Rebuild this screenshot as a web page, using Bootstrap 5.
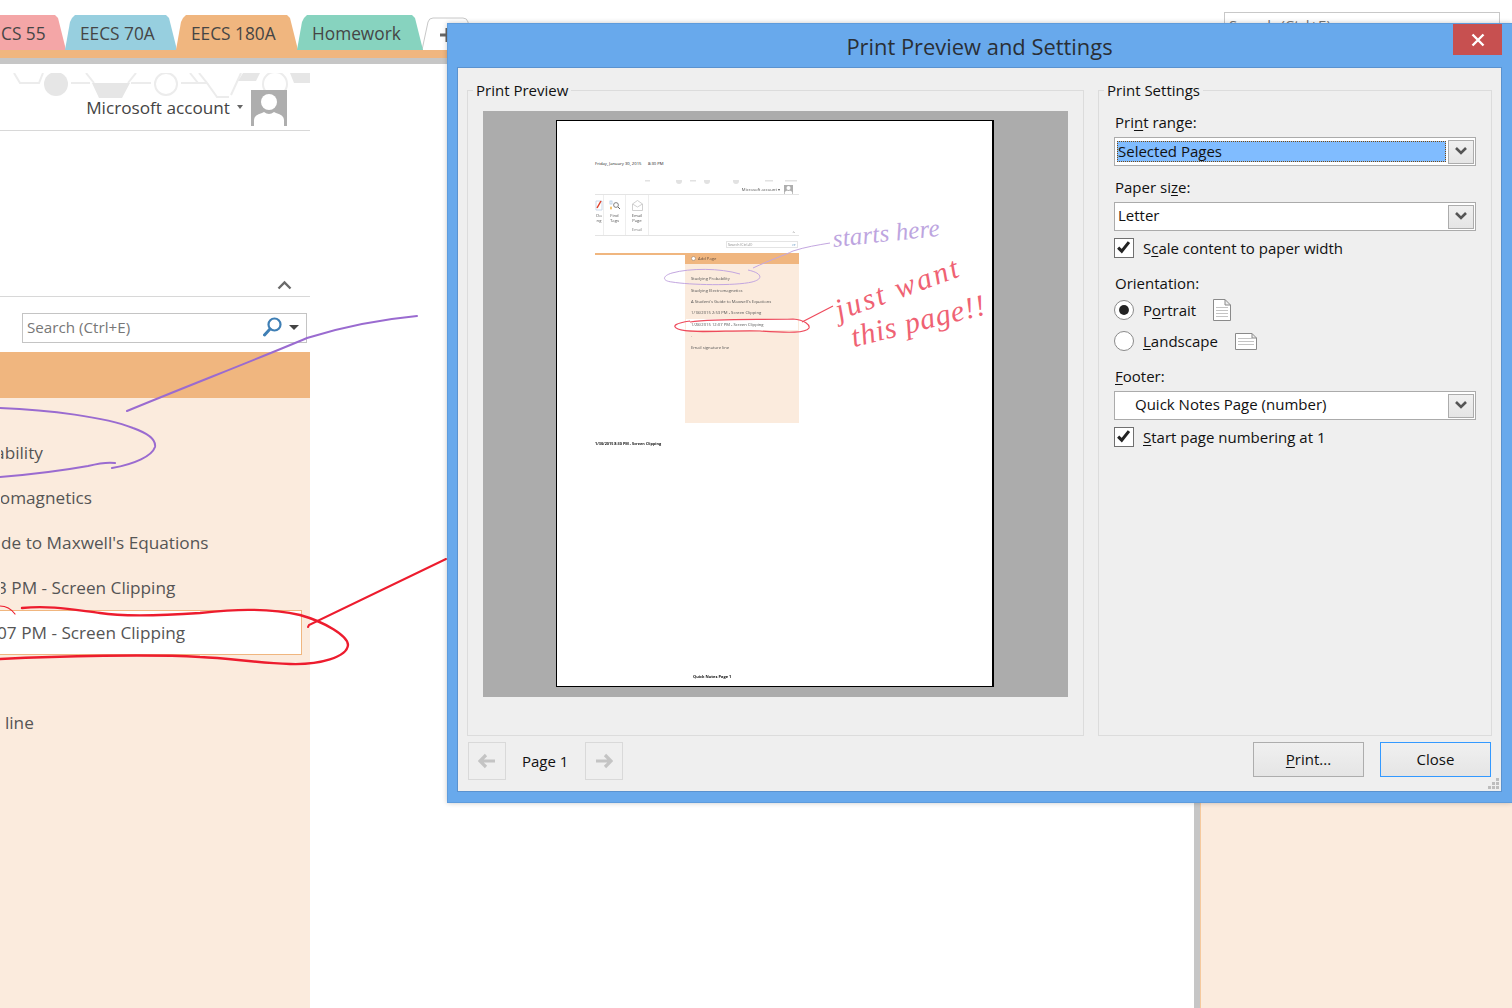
<!DOCTYPE html>
<html lang="en">
<head>
<meta charset="UTF-8">
<title>Print Preview and Settings</title>
<link rel="stylesheet" href="https://cdn.jsdelivr.net/npm/bootstrap@5.3.0/dist/css/bootstrap.min.css">
<style>
    html, body { margin: 0; height: 1008px; overflow: hidden; background: #fff; }
    body, .btn, legend { font-family: "Open Sans", "Noto Sans", sans-serif; }
    .desk { position: relative; width: 1512px; height: 1008px; overflow: hidden; display: flex; flex-direction: column; }

    /* notebook behind the dialog */
    .tab-row { height: 50px; flex: none; display: flex; align-items: flex-end; overflow: hidden; }
    .nb-tab {
        height: 35px; flex: none; display: flex; align-items: center; padding: 3px 0 0 15px;
        font-size: 17.3px; color: #454545; margin-right: -1px;
        clip-path: polygon(0 100%, 5px 7px, 7px 3px, 10px 0, calc(100% - 11px) 0, calc(100% - 8px) 3px, calc(100% - 7px) 7px, 100% 100%);
    }
    .tab-pink { background: #f4a6a7; width: 66px; padding-left: 0; text-indent: 1px; clip-path: polygon(0 0, calc(100% - 11px) 0, calc(100% - 8px) 3px, calc(100% - 7px) 7px, 100% 100%, 0 100%); }
    .tab-blue { background: #97cfdf; width: 112px; }
    .tab-orange { background: #f0b67f; width: 122px; }
    .tab-green { background: #87d3bf; width: 126px; }
    .tab-search {
        width: 276px; height: 24px; border: 1px solid #c8c8c8; align-self: flex-start; margin: 12px 12px 0 auto;
        font-size: 15px; color: #777; padding: 1px 4px; flex: none;
    }
    .section-bar { height: 8px; background: #f0b67f; flex: none; }
    .gray-bar { height: 6px; background: #c6c6c6; flex: none; }
    .nb-body { flex: 1; display: flex; min-height: 0; }
    .left-col { width: 310px; flex: none; overflow: hidden; display: flex; flex-direction: column; padding-top: 9px; }
    .deco { display: block; margin-bottom: -8px; flex: none; }
    .account-row { height: 36px; display: flex; justify-content: flex-end; align-items: center; padding-right: 23px; flex: none; font-size: 17.2px; color: #444; position: relative; }
    .account-caret { border-left: 3.5px solid transparent; border-right: 3.5px solid transparent; border-top: 4px solid #666; margin: 0 8px 3px 7px; }
    .ribbon-area { height: 167px; flex: none; margin-top: 4px; border-top: 1px solid #d8d8d8; border-bottom: 1px solid #d8d8d8; display: flex; justify-content: flex-end; align-items: flex-end; padding: 0 18px 6px 0; }
    .search-row { height: 55px; flex: none; padding: 16px 3px 0 22px; }
    .nb-search { height: 30px; border: 1px solid #c4c4c4; display: flex; align-items: center; padding: 0 7px 2px 4px; font-size: 15.2px; color: #777; }
    .search-caret { border-left: 5px solid transparent; border-right: 5px solid transparent; border-top: 5px solid #444; margin-left: 7px; }
    .pages-head { height: 46px; background: #f0b67f; flex: none; }
    .pages-list { flex: 1; background: #fbebdd; padding-top: 32px; white-space: nowrap; }
    .page-row { height: 45px; display: flex; align-items: center; font-size: 17.2px; color: #555; width: 302px; border: 1px solid transparent; overflow: hidden; }
    .page-row span { flex: none; margin-left: var(--cut); }
    .page-row.on { background: #fff; border-color: #f0b67f; border-left: 0; }
    .splitter { margin-left: 884px; width: 6px; background: #c6c6c6; flex: none; }
    .right-peach { flex: 1; background: #fbebdd; border-left: 1px solid #f5c99d; }
    .ink-back { position: absolute; left: 0; top: 0; pointer-events: none; }

    /* dialog */
    .dlg { position: absolute; left: 447px; top: 23px; width: 1065px; height: 780px; background: #68a9ec; box-shadow: 0 0 5px rgba(0,0,0,.22); display: flex; flex-direction: column; border: 1px solid #5e9cdd; border-right: 0; }
    .dlg-title { height: 43px; flex: none; display: flex; align-items: center; justify-content: center; font-size: 21.9px; color: #2a2f36; padding-top: 4px; padding-right: 1px; }
    .dlg-close { position: absolute; right: 10px; top: 0; width: 49px; height: 31px; background: #c75050; display: flex; align-items: center; justify-content: center; }
    .dlg-main { margin: 0 10px 10px 9px; flex: 1; background: #efefef; border: 1px solid #5a92cf; display: flex; flex-direction: column; position: relative; min-height: 0; }
    .dlg-cols { display: flex; gap: 14px; padding: 12px 9px 0 9px; height: 668px; flex: none; }
    .grp { margin: 0; border: 1px solid #dcdcdc; padding: 0; min-width: 0; height: 656px; }
    .grp legend { float: none; width: auto; font-size: 15px; line-height: 20px; margin: 0 0 0 5px; padding: 0 3px; color: #111; }
    .grp-preview { width: 617px; flex: none; }
    .grp-settings { width: 394px; flex: none; padding: 0 15px 0 15px; color: #111; font-size: 15px; }
    .preview-gray { margin: 11px 15px 0 15px; height: 586px; background: #acacac; padding: 9px 0 0 73px; }
    .prev-page { position: relative; width: 438px; height: 567px; background: #fff; border: 1px solid #000; border-right-width: 2px; overflow: hidden; padding: 0 0 0 38px; display: flex; flex-direction: column; color: #333; }
    .ink-front { position: absolute; left: -1px; top: -1px; width: 438px; height: 567px; }
    .hand { position: absolute; font-family: "Liberation Serif", serif; font-style: italic; white-space: nowrap; line-height: 1; transform-origin: 0 100%; }
    .hand-purple { color: #bda5e0; font-size: 25px; letter-spacing: .2px; left: 277px; top: 105px; transform: rotate(-6deg); }
    .hand-red { color: #ef6273; font-size: 30px; }
    .hand-a { left: 284px; top: 174px; transform: rotate(-20deg); letter-spacing: 2.5px; }
    .hand-b { left: 298px; top: 201px; transform: rotate(-14deg); letter-spacing: .8px; }

    .mini-date { font-size: 4.2px; line-height: 5px; margin-top: 40px; height: 5px; color: #222; white-space: pre; flex: none; }
    .mini-app { width: 204px; height: 243px; margin-top: 14px; display: flex; flex-direction: column; flex: none; font-size: 4.2px; line-height: 5px; color: #555; filter: blur(.2px); }
    .mini-deco { height: 5px; display: block; margin-bottom: -1px; flex: none; }
    .mini-account { height: 11px; flex: none; display: flex; align-items: center; justify-content: flex-end; padding-right: 6px; gap: 4px; border-bottom: 1px solid #e4e4e4; }
    .mini-ribbon { height: 41px; flex: none; display: flex; border-bottom: 1px solid #e4e4e4; text-align: center; }
    .mini-group { display: flex; flex-direction: column; align-items: center; border-right: 1px solid #eee; padding-top: 5px; }
    .mini-group svg { display: block; margin-bottom: 2px; }
    .mini-search-row { height: 17px; flex: none; padding: 5px 1px 0 131px; }
    .mini-search { height: 7px; border: 1px solid #e4e4e4; display: flex; justify-content: space-between; align-items: center; line-height: 4px; font-size: 3.6px; color: #888; padding: 0 1px; }
    .mini-split { flex: 1; display: flex; min-height: 0; }
    .mini-left { width: 90px; flex: none; border-top: 2px solid #f0b67f; }
    .mini-pages { flex: 1; background: #fbebdd; }
    .mini-head { height: 11px; background: #f0b67f; padding-left: 6px; display: flex; align-items: center; gap: 2px; color: #6b5240; }
    .mini-list { padding: 9px 0 0 1px; white-space: nowrap; }
    .mini-row { height: 11.4px; display: flex; align-items: center; padding-left: 5px; width: 112px; }
    .mini-row.on { background: #fff; }
    .mini-foot { font-size: 3.8px; font-weight: 700; line-height: 5px; margin-top: 18px; color: #111; flex: none; filter: blur(.2px); }
    .page-foot { font-size: 4px; font-weight: 700; line-height: 5px; margin-top: auto; margin-bottom: 7px; margin-left: 98px; color: #111; flex: none; filter: blur(.2px); }

    .fld-label { line-height: 20px; height: 20px; padding-left: 1px; }
    .combo { height: 29px; background: #fff; border: 1px solid #ababab; display: flex; align-items: center; padding: 2px 1px 2px 2px; margin-top: 4px; }
    .combo-text { flex: 1; padding-left: 1px; line-height: 21px; height: 23px; }
    .combo-text.sel { background: #80bcff; outline: 1px dotted #7a4a10; outline-offset: -1px; height: 21px; margin-right: 2px; line-height: 20px; }
    .combo-arrow { width: 26px; height: 24px; flex: none; border: 1px solid #acacac; background: linear-gradient(#f0f0f0, #e5e5e5); display: flex; align-items: center; justify-content: center; }
    .chk-row { display: flex; align-items: center; height: 20px; gap: 9px; }
    .chk-row .form-check-input { margin: 0; width: 20px; height: 20px; flex: none; border: 1px solid #707070; background-color: #fff; box-shadow: none; }
    .chk-row .form-check-input[type=checkbox] { border-radius: 0; background-size: 100%; }
    .chk-row .form-check-input:checked[type=checkbox] { background-color: #fff; border-color: #707070; background-image: url("data:image/svg+xml,%3csvg xmlns='http://www.w3.org/2000/svg' viewBox='0 0 20 20'%3e%3cpath fill='none' stroke='%23222' stroke-width='3.4' d='M3.5 9.5l4 4 8-10'/%3e%3c/svg%3e"); }
    .chk-row .form-check-input[type=radio] { border-color: #8a8a8a; }
    .chk-row .form-check-input:checked[type=radio] { background-color: #fff; border-color: #8a8a8a; background-image: url("data:image/svg+xml,%3csvg xmlns='http://www.w3.org/2000/svg' viewBox='-4 -4 8 8'%3e%3ccircle r='2.2' fill='%23222'/%3e%3c/svg%3e"); background-size: 100%; }
    .chk-row label { line-height: 20px; }
    .und { text-decoration: underline; text-underline-offset: 2px; text-decoration-thickness: 1px; }
    .dlg-foot { display: flex; align-items: flex-start; padding: 6px 10px 0 10px; flex: 1; font-size: 15px; color: #111; }
    .nav-btn { width: 38px; height: 38px; border: 1px solid #d9d9d9; display: flex; align-items: center; justify-content: center; flex: none; }
    .page-lbl { width: 79px; flex: none; padding-left: 16px; line-height: 38px; }
    .act-btn { width: 111px; height: 35px; border: 1px solid #adadad; border-radius: 0; background: linear-gradient(#f0f0f0, #e5e5e5); font-size: 15px; color: #111; padding: 0; line-height: 33px; flex: none; }
    .act-btn.dflt { border-color: #3399ff; margin-left: 16px; }
    .grip { position: absolute; right: 1px; bottom: 1px; display: block; }
</style>
</head>
<body>
<div class="desk">
    <div class="tab-row">
        <div class="nb-tab tab-pink">CS 55</div>
        <div class="nb-tab tab-blue">EECS 70A</div>
        <div class="nb-tab tab-orange">EECS 180A</div>
        <div class="nb-tab tab-green">Homework</div>
        <svg width="50" height="33" viewBox="0 0 50 33" class="flex-none">
            <path d="M0 33L6 5Q7 1 11 1H41Q45 1 46 5L50 33" fill="#fff" stroke="#c8c8c8"/>
            <path d="M18 18h14M25 11v14" stroke="#666" stroke-width="3"/>
        </svg>
        <div class="tab-search">Search (Ctrl+E)</div>
    </div>
    <div class="section-bar"></div>
    <div class="gray-bar"></div>
    <div class="nb-body">
        <div class="left-col">
            <svg class="deco" width="310" height="25" viewBox="0 73 310 25">
                <g fill="none" stroke="#ececec" stroke-width="2">
                    <path d="M14 73l6 10h19l4-10M71 83h19M86 73l8 10M136 73l-8 10M131 83h20M199 73l8 10h-26M241 73l-10 22M207 83l10 14h12M190 73l8 10"/>
                    <circle cx="166" cy="84" r="11"/><circle cx="275" cy="84" r="12"/>
                </g>
                <g fill="#e6e6e6">
                    <circle cx="56" cy="84" r="12"/>
                    <path d="M92 83h38l-8 15H99zM243 73h17l-4 8h-18zM290 73h20v10h-16z"/>
                </g>
            </svg>
            <div class="account-row">
                <span>Microsoft account</span><span class="account-caret"></span>
                <svg width="36" height="36" viewBox="0 0 36 36" class="flex-none">
                    <rect width="36" height="36" fill="#aeaeae"/>
                    <circle cx="18" cy="12" r="8" fill="#fff"/>
                    <path d="M3 36V30Q3 25 11 23L13 22Q18 26 23 22L25 23Q33 25 33 30V36Z" fill="#fff"/>
                </svg>
            </div>
            <div class="ribbon-area">
                <svg width="15" height="10" viewBox="0 0 15 10"><path d="M1.5 8.5L7.5 2.5L13.5 8.5" fill="none" stroke="#6a6a6a" stroke-width="2.4"/></svg>
            </div>
            <div class="search-row">
                <div class="nb-search">
                    <span class="flex-grow-1">Search (Ctrl+E)</span>
                    <svg width="19" height="20" viewBox="0 0 19 20"><circle cx="11.5" cy="7.5" r="6" fill="none" stroke="#3f7fb5" stroke-width="2.2"/><path d="M7 12L1.5 18" stroke="#3f7fb5" stroke-width="3" stroke-linecap="round"/></svg>
                    <span class="search-caret"></span>
                </div>
            </div>
            <div class="pages-head"></div>
            <div class="pages-list">
                <div class="page-row" style="--cut:-118px"><span>Studying Probability</span></div>
                <div class="page-row" style="--cut:-120px"><span>Studying Electromagnetics</span></div>
                <div class="page-row" style="--cut:-122px"><span>A Student's Guide to Maxwell's Equations</span></div>
                <div class="page-row" style="--cut:-114px"><span>1/18/2015 2:53 PM - Screen Clipping</span></div>
                <div class="page-row on" style="--cut:-113px"><span>1/28/2015 12:07 PM - Screen Clipping</span></div>
                <div class="page-row"></div>
                <div class="page-row" style="--cut:-124px"><span>Email signature line</span></div>
            </div>
        </div>
        <div class="splitter"></div>
        <div class="right-peach"></div>
    </div>

    <svg class="ink-back" width="1512" height="1008" viewBox="0 0 1512 1008" fill="none">
        <g stroke="#9a6bd0" stroke-width="2" stroke-linecap="round">
            <path d="M127 411C190 385 260 358 307 338C345 326 385 319 417 316"/>
            <path d="M0 408C50 410 105 417 133 428C150 434 156 441 155 447C152 456 135 464 112 468"/>
            <path d="M115 463C108 462 100 463 88 466C60 471 25 475 0 477"/>
        </g>
        <g stroke="#ed1c2e" stroke-linecap="round">
            <path d="M308 627L309 625L446 559" stroke-width="2"/>
            <path d="M22 608C50 605 75 610 100 613C125 617 170 615 200 613C230 610 265 607 300 615C325 622 348 636 348 645C347 657 320 665 290 664C255 663 230 658 200 657C150 654 60 656 0 659" stroke-width="2.4"/>
            <path d="M0 606C8 606 12 610 15 614" stroke-width="1.2"/>
        </g>
    </svg>

    <div class="dlg">
        <div class="dlg-title">Print Preview and Settings</div>
        <div class="dlg-close">
            <svg width="14" height="14" viewBox="0 0 14 14"><path d="M1.5 1.5l11 11M12.5 1.5l-11 11" stroke="#fff" stroke-width="2.4"/></svg>
        </div>
        <div class="dlg-main">
            <div class="dlg-cols">
                <fieldset class="grp grp-preview">
                    <legend>Print Preview</legend>
                    <div class="preview-gray">
                        <div class="prev-page">
                            <div class="mini-date">Friday, January 30, 2015      8:30 PM</div>
                            <div class="mini-app">
                                <svg class="mini-deco" width="204" height="5" viewBox="0 0 204 5" fill="#e2e2e2">
                                    <circle cx="84" cy="1" r="3"/><circle cx="112" cy="1" r="3"/><circle cx="141" cy="1" r="3"/><rect x="50" y="0" width="5" height="1.5"/><rect x="95" y="0" width="6" height="1.5"/><rect x="170" y="0" width="8" height="1.5"/><rect x="190" y="0" width="12" height="1.5"/>
                                </svg>
                                <div class="mini-account"><span>Microsoft account ▾</span>
                                    <svg width="9" height="9" viewBox="0 0 36 36"><rect width="36" height="36" fill="#aeaeae"/><circle cx="18" cy="12" r="8" fill="#fff"/><path d="M3 36V30Q3 25 11 23L13 22Q18 26 23 22L25 23Q33 25 33 30V36Z" fill="#fff"/></svg>
                                </div>
                                <div class="mini-ribbon">
                                    <div class="mini-group" style="width:9px">
                                        <svg width="8" height="11" viewBox="0 0 8 11"><path d="M1 1h6v9H1z" fill="none" stroke="#cbd8ea"/><path d="M6 1L2 8" stroke="#e0402a" stroke-width="1.5"/></svg>
                                        <span>Do<br>ng</span>
                                    </div>
                                    <div class="mini-group" style="width:22px">
                                        <svg width="12" height="11" viewBox="0 0 12 11"><rect x="1" y="1" width="2" height="3" fill="none" stroke="#a8c4e0" stroke-width=".7"/><path d="M2 6l1 2-1 2-1-2z" fill="#f0b040"/><circle cx="7" cy="5" r="2.4" fill="none" stroke="#666" stroke-width=".8"/><path d="M9 7l2 2" stroke="#666"/></svg>
                                        <span>Find<br>Tags</span>
                                    </div>
                                    <div class="mini-group" style="width:23px">
                                        <svg width="11" height="11" viewBox="0 0 11 11"><path d="M.5 4L5.5 .5 10.5 4V10.5H.5ZM.5 4L5.5 7 10.5 4" fill="none" stroke="#c4c4c4" stroke-width=".8"/></svg>
                                        <span>Email<br>Page</span>
                                        <span class="mt-1" style="color:#888">Email</span>
                                    </div>
                                    <div class="ms-auto align-self-end pe-1">^</div>
                                </div>
                                <div class="mini-search-row"><div class="mini-search"><span>Search (Ctrl+E)</span><span style="color:#3f7fb5">⌕▾</span></div></div>
                                <div class="mini-split">
                                    <div class="mini-left"></div>
                                    <div class="mini-pages">
                                        <div class="mini-head">
                                            <svg width="5" height="5" viewBox="0 0 10 10"><circle cx="5" cy="5" r="4" fill="#fff" stroke="#8a7460"/></svg>
                                            <span>Add Page</span>
                                        </div>
                                        <div class="mini-list">
                                            <div class="mini-row">Studying Probability</div>
                                            <div class="mini-row">Studying Electromagnetics</div>
                                            <div class="mini-row">A Student's Guide to Maxwell's Equations</div>
                                            <div class="mini-row">1/18/2015 2:53 PM - Screen Clipping</div>
                                            <div class="mini-row on">1/28/2015 12:07 PM - Screen Clipping</div>
                                            <div class="mini-row">.</div>
                                            <div class="mini-row">Email signature line</div>
                                        </div>
                                    </div>
                                </div>
                            </div>
                            <div class="mini-foot">1/30/2015 8:30 PM - Screen Clipping</div>
                            <div class="page-foot">Quick Notes Page 1</div>

                            <svg class="ink-front" viewBox="556 120 438 567" fill="none">
                                <g stroke="#c3a6e0" stroke-width="1">
                                    <path d="M753 268C770 260 785 255 793 251C805 247 818 245 830 243"/>
                                    <path d="M740 274C720 268 690 268 672 273C662 276 662 281 672 282C690 285 735 286 752 282C764 279 762 273 748 270"/>
                                </g>
                                <g stroke="#ee4a5c" stroke-width="1.2">
                                    <path d="M802 322L833 306"/>
                                    <path d="M690 322C715 318 760 320 793 319C805 320 810 325 809 328C806 333 790 333 760 331C730 330 690 334 678 329C671 326 676 323 690 321"/>
                                </g>
                            </svg>
                            <span class="hand hand-purple">starts here</span>
                            <span class="hand hand-red hand-a">just want</span>
                            <span class="hand hand-red hand-b">this page!!</span>
                        </div>
                    </div>
                </fieldset>
                <fieldset class="grp grp-settings">
                    <legend style="margin-left:-10px">Print Settings</legend>
                    <div class="fld-label" style="margin-top:12px">Pri<span class="und">n</span>t range:</div>
                    <div class="combo" style="margin-top:5px">
                        <div class="combo-text sel">Selected Pages</div>
                        <div class="combo-arrow"><svg width="12" height="9" viewBox="0 0 12 9"><path d="M1 1l5 5 5-5" fill="none" stroke="#555" stroke-width="2.6"/></svg></div>
                    </div>
                    <div class="fld-label" style="margin-top:11px">Paper si<span class="und">z</span>e:</div>
                    <div class="combo" style="margin-top:5px">
                        <div class="combo-text">Letter</div>
                        <div class="combo-arrow"><svg width="12" height="9" viewBox="0 0 12 9"><path d="M1 1l5 5 5-5" fill="none" stroke="#555" stroke-width="2.6"/></svg></div>
                    </div>
                    <div class="chk-row" style="margin-top:7px">
                        <input class="form-check-input" type="checkbox" id="chkScale" checked>
                        <label for="chkScale">S<span class="und">c</span>ale content to paper width</label>
                    </div>
                    <div class="fld-label" style="margin-top:15px">Orientation:</div>
                    <div class="chk-row" style="margin-top:7px">
                        <input class="form-check-input" type="radio" name="orient" id="rdPortrait" checked>
                        <label for="rdPortrait">P<span class="und">o</span>rtrait</label>
                        <svg class="ms-2" width="18" height="22" viewBox="0 0 18 22" fill="none" stroke="#8a8a8a"><path d="M.5.5H12L17.5 6V21.5H.5ZM12 .5V6H17.5" fill="#fff"/><path d="M3 8.5H15M3 11.5H15M3 14.5H15M3 17.5H15" stroke="#c4c4c4"/></svg>
                    </div>
                    <div class="chk-row" style="margin-top:11px">
                        <input class="form-check-input" type="radio" name="orient" id="rdLandscape">
                        <label for="rdLandscape"><span class="und">L</span>andscape</label>
                        <svg class="ms-2" width="22" height="17" viewBox="0 0 22 17" fill="none" stroke="#8a8a8a"><path d="M.5.5H17L21.5 5V16.5H.5ZM17 .5V5H21.5" fill="#fff"/><path d="M3 5.5H18M3 8.5H19M3 11.5H19" stroke="#c4c4c4"/></svg>
                    </div>
                    <div class="fld-label" style="margin-top:15px"><span class="und">F</span>ooter:</div>
                    <div class="combo" style="margin-top:5px">
                        <div class="combo-text" style="padding-left:18px">Quick Notes Page (number)</div>
                        <div class="combo-arrow"><svg width="12" height="9" viewBox="0 0 12 9"><path d="M1 1l5 5 5-5" fill="none" stroke="#555" stroke-width="2.6"/></svg></div>
                    </div>
                    <div class="chk-row" style="margin-top:7px">
                        <input class="form-check-input" type="checkbox" id="chkStart" checked>
                        <label for="chkStart"><span class="und">S</span>tart page numbering at 1</label>
                    </div>
                </fieldset>
            </div>
            <div class="dlg-foot">
                <div class="nav-btn"><svg width="18" height="16" viewBox="0 0 18 16"><path d="M8 2L2 8l6 6M2 8H17" fill="none" stroke="#c4c4c4" stroke-width="3.2"/></svg></div>
                <div class="page-lbl">Page 1</div>
                <div class="nav-btn"><svg width="18" height="16" viewBox="0 0 18 16"><path d="M10 2l6 6-6 6M16 8H1" fill="none" stroke="#c4c4c4" stroke-width="3.2"/></svg></div>
                <button type="button" class="btn act-btn ms-auto"><span class="und">P</span>rint...</button>
                <button type="button" class="btn act-btn dflt">Close</button>
            </div>
            <svg class="grip" width="13" height="13" viewBox="0 0 13 13" fill="#bdbdbd">
                <rect x="9" y="1" width="3" height="3"/><rect x="5" y="5" width="3" height="3"/><rect x="9" y="5" width="3" height="3"/><rect x="1" y="9" width="3" height="3"/><rect x="5" y="9" width="3" height="3"/><rect x="9" y="9" width="3" height="3"/>
            </svg>
        </div>
    </div>
</div>
<script src="https://cdn.jsdelivr.net/npm/bootstrap@5.3.0/dist/js/bootstrap.bundle.min.js"></script>
</body>
</html>
